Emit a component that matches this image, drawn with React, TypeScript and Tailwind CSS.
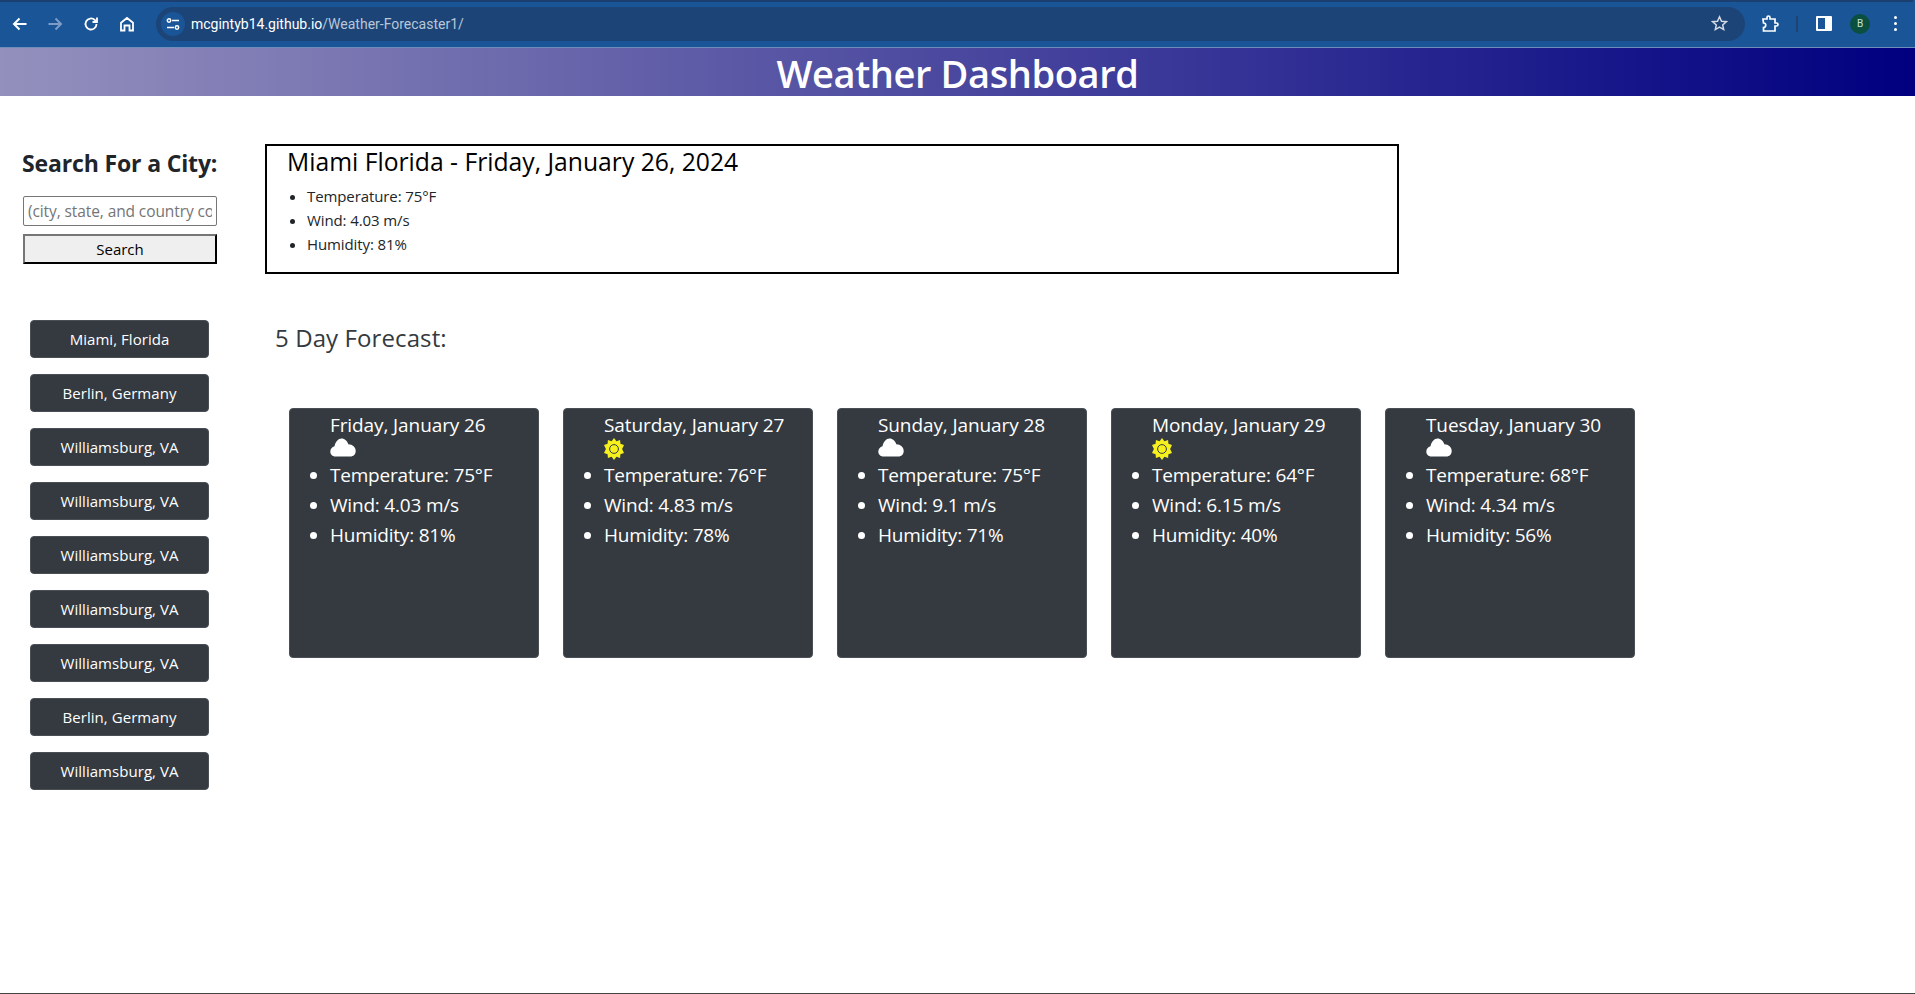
import React from "react";

const F = "[font-family:'Open_Sans','Noto_Sans',sans-serif]";

function Cloud() {
  return (
    <svg width="26" height="19" viewBox="0 0 26 19" className="block">
      <path d="M5.500 18.500C2.300 18.500 .3 16.300 .3 13.500 .3 10.900 2 9 4.500 8.300 5.500 3.600 8.300 .5 11.500 .5 14.800 .5 17.300 3 18.300 6.300 22.600 6.300 25.700 9.300 25.700 13 25.700 16.300 23.500 18.500 20.300 18.500Z" fill="#ffffff" />
    </svg>
  );
}

function Sun() {
  return (
    <svg width="20" height="22" viewBox="0 0 20 22" className="block">
      <path d="M10 0l2.400 3.200 3.700-1.300.3 3.900 3.600 1.200-1.900 4 1.900 4-3.600 1.200-.3 3.900-3.700-1.300L10 22l-2.400-3.200-3.700 1.300-.3-3.900L0 15l1.900-4L0 7l3.600-1.200.3-3.900 3.700 1.300z" fill="#f5f01e" />
      <circle cx="10" cy="11" r="4.400" fill="#f5f01e" stroke="#343a40" strokeWidth="1" />
    </svg>
  );
}

const cities = [
  "Miami, Florida",
  "Berlin, Germany",
  "Williamsburg, VA",
  "Williamsburg, VA",
  "Williamsburg, VA",
  "Williamsburg, VA",
  "Williamsburg, VA",
  "Berlin, Germany",
  "Williamsburg, VA",
];

const days = [
  { d: "Friday, January 26", icon: "cloud", t: "75", w: "4.03", h: "81" },
  { d: "Saturday, January 27", icon: "sun", t: "76", w: "4.83", h: "78" },
  { d: "Sunday, January 28", icon: "cloud", t: "75", w: "9.1", h: "71" },
  { d: "Monday, January 29", icon: "sun", t: "64", w: "6.15", h: "40" },
  { d: "Tuesday, January 30", icon: "cloud", t: "68", w: "4.34", h: "56" },
];

function ChromeBar() {
  return (
    <div className="h-[48px] bg-[#1a5597] border-b border-[#6f8dba] flex items-center relative">
      <div className="absolute top-0 left-0 right-[2px] h-[2px] bg-[#1c3f72]" />
      <div className="flex items-center w-[156px] pl-[12px] text-white">
        <svg width="16" height="16" viewBox="0 0 16 16" fill="none" stroke="currentColor" strokeWidth="2" className="mr-[19px]">
          <path d="M14.500 8H2M7.500 2.500 2 8l5.500 5.500" />
        </svg>
        <svg width="16" height="16" viewBox="0 0 16 16" fill="none" stroke="#7d9cc6" strokeWidth="2" className="mr-[20px]">
          <path d="M1.500 8H14M8.500 2.500 14 8l-5.500 5.500" />
        </svg>
        <svg width="16" height="16" viewBox="0 0 16 16" fill="none" stroke="currentColor" strokeWidth="1.800" className="mr-[20px]">
          <path d="M13.500 8a5.500 5.500 0 1 1-1.700-4L13.500 5.500" />
          <path d="M14 1.500V6H9.500" />
        </svg>
        <svg width="16" height="16" viewBox="0 0 16 16" fill="none" stroke="currentColor" strokeWidth="1.800">
          <path d="M2 14.500V6.800L8 2l6 4.800v7.700h-3.500V9.500h-5v5z" />
        </svg>
      </div>
      <div className="w-[1589px] h-[34px] rounded-full bg-[#1c4477] flex items-center pl-[5px] pr-[17px] shrink-0">
        <div className="w-[24px] h-[24px] rounded-full bg-[#1a5597] flex items-center justify-center mr-[6px]">
          <svg width="14" height="14" viewBox="0 0 14 14" fill="none" stroke="#ffffff" strokeWidth="1.500">
            <path d="M6 3.500h7M1 10.500h7" />
            <circle cx="3" cy="3.500" r="1.700" />
            <circle cx="11" cy="10.500" r="1.700" />
          </svg>
        </div>
        <div className="pt-[1px] text-[14px] font-['Roboto',sans-serif] text-[#b9c7d9] whitespace-nowrap flex-1">
          <span className="text-white">mcgintyb14.github.io</span>/Weather-Forecaster1/
        </div>
        <svg width="17" height="17" viewBox="0 0 17 17" fill="none" stroke="#d4dbe5" strokeWidth="1.500">
          <path d="M8.500 1.800l2 4.400 4.800.5-3.600 3.200 1 4.700-4.200-2.400-4.200 2.400 1-4.700L1.700 6.700l4.800-.5z" />
        </svg>
      </div>
      <svg width="18" height="18" viewBox="0 0 18 18" fill="none" stroke="#ffffff" strokeWidth="1.700" className="ml-[16px]">
        <path d="M2 4h4V2.500a1.500 1.500 0 0 1 3 0V4h5v4h1.500a1.500 1.500 0 0 1 0 3H14v5H2.500v-3.500a2 2 0 0 0 0-4.500z" />
      </svg>
      <div className="w-[2px] h-[16px] bg-[#1c4477] ml-[17px]" />
      <svg width="16" height="15" viewBox="0 0 16 15" className="ml-[18px]">
        <path d="M1 0h14a1 1 0 0 1 1 1v13a1 1 0 0 1-1 1H1a1 1 0 0 1-1-1V1a1 1 0 0 1 1-1zm1 2v11h7V2z" fill="#ffffff" fillRule="evenodd" />
      </svg>
      <div className="w-[20px] h-[20px] rounded-full bg-[#0a4f40] ml-[18px] text-[10px] text-[#c7e4d8] flex items-center justify-center font-['Roboto',sans-serif]">
        B
      </div>
      <div className="ml-[24px] flex flex-col gap-[3px]">
        <div className="w-[3px] h-[3px] rounded-full bg-white" />
        <div className="w-[3px] h-[3px] rounded-full bg-white" />
        <div className="w-[3px] h-[3px] rounded-full bg-white" />
      </div>
    </div>
  );
}

export default function App() {
  return (
    <div className={`w-[1915px] h-[994px] bg-white flex flex-col overflow-hidden ${F}`}>
      <ChromeBar />
      <header className="h-[48px] pt-[3px] bg-[linear-gradient(to_right,#9490bd,#000080)] flex items-center justify-center text-white text-[38px] font-semibold tracking-[-0.4px]">
        Weather Dashboard
      </header>
      <div className="flex-1 flex items-start">
        <aside className="w-[265px] pl-[23px] pt-[52px] shrink-0">
          <h2 className="w-[193px] -ml-[1px] text-[23px] leading-[30px] font-bold text-[#212529] whitespace-nowrap tracking-[-0.15px]">
            Search For a City:
          </h2>
          <input
            readOnly
            placeholder="(city, state, and country code)"
            className="block mt-[18px] w-[194px] h-[30px] border border-[#767676] rounded-[2px] px-[4px] text-[15.500px] placeholder:text-[#757575] tracking-[-0.1px]"
          />
          <button className="block mt-[8px] w-[194px] h-[30px] pt-[1px] bg-[#efefef] border-2 border-t-[#767676] border-l-[#767676] border-r-black border-b-black text-[15px] text-black leading-none">
            Search
          </button>
          <div className="mt-[56px] ml-[7px] flex flex-col gap-[16px]">
            {cities.map((c, i) => (
              <button
                key={i}
                className="w-[179px] h-[38px] pt-[1px] bg-[#343a40] border border-[#4a4f55] rounded-[4px] text-white text-[15px] tracking-[0.05px]"
              >
                {c}
              </button>
            ))}
          </div>
        </aside>
        <main className="flex-1 pt-[48px]">
          <section className="w-[1134px] h-[130px] border-[2.500px] border-black text-[#212529] pl-[20px]">
            <h3 className="pt-[1px] text-[24.700px] leading-[29px] text-black">Miami Florida - Friday, January 26, 2024</h3>
            <ul className="list-disc pl-[20px] mt-[8px] text-[15px] leading-[24px] tracking-[-0.1px]">
              <li>Temperature: 75°F</li>
              <li>Wind: 4.03 m/s</li>
              <li>Humidity: 81%</li>
            </ul>
          </section>
          <h4 className="ml-[10px] mt-[46px] text-[24px] leading-[36px] text-[#343a40] tracking-[0.1px]">5 Day Forecast:</h4>
          <div className="ml-[24px] mt-[52px] flex gap-[24px]">
            {days.map((x) => (
              <article key={x.d} className="w-[250px] h-[250px] pt-[1px] bg-[#343a40] border border-[#4a4f55] rounded-[4px] text-white">
                <div className="pl-[40px] text-[19px] leading-[30px] tracking-[-0.1px] whitespace-nowrap">{x.d}</div>
                <div className="pl-[40px] -mt-[2px] h-[22px] flex items-start">{x.icon === "cloud" ? <Cloud /> : <Sun />}</div>
                <ul className="list-disc pl-[40px] text-[19px] leading-[30px] tracking-[-0.2px]">
                  <li>Temperature: {x.t}°F</li>
                  <li>Wind: {x.w} m/s</li>
                  <li>Humidity: {x.h}%</li>
                </ul>
              </article>
            ))}
          </div>
        </main>
      </div>
      <div className="h-[1px] bg-[#444444]" />
    </div>
  );
}
